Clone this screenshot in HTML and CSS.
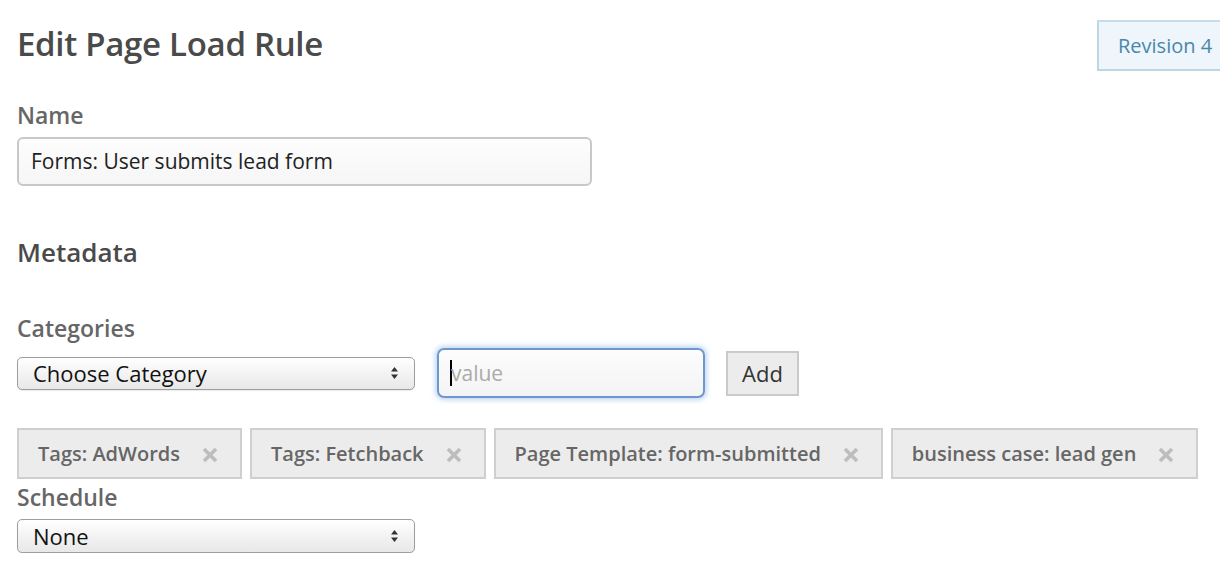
FILE: index.html
```html
<!DOCTYPE html>
<html>
<head>
<meta charset="utf-8">
<link rel="stylesheet" href="styles.css">
</head>
<body>
<div class="page">
  <header class="header">
    <h1 class="title">Edit Page Load Rule</h1>
    <div class="revision">Revision 4</div>
  </header>

  <section class="field name-field">
    <label class="label">Name</label>
    <div class="text-input name-input">Forms: User submits lead form</div>
  </section>

  <h2 class="section-title">Metadata</h2>

  <section class="field categories">
    <label class="label">Categories</label>
    <div class="cat-row">
      <div class="select">
        <span>Choose Category</span>
        <svg class="arrows" width="9" height="14" viewBox="0 0 9 14"><path d="M4.5 1 L8 5.5 L1 5.5 Z M4.5 13 L8 8.5 L1 8.5 Z" fill="#333"/></svg>
      </div>
      <div class="value-input"><span class="caret"></span><span class="placeholder">value</span></div>
      <button class="add-btn">Add</button>
    </div>
    <div class="tags">
      <div class="tag"><span>Tags: AdWords</span><svg class="x" width="16" height="16" viewBox="0 0 16 16"><path d="M2 2 L14 14 M14 2 L2 14" stroke="#bdbdbd" stroke-width="3.6"/></svg></div>
      <div class="tag"><span>Tags: Fetchback</span><svg class="x" width="16" height="16" viewBox="0 0 16 16"><path d="M2 2 L14 14 M14 2 L2 14" stroke="#bdbdbd" stroke-width="3.6"/></svg></div>
      <div class="tag"><span>Page Template: form-submitted</span><svg class="x" width="16" height="16" viewBox="0 0 16 16"><path d="M2 2 L14 14 M14 2 L2 14" stroke="#bdbdbd" stroke-width="3.6"/></svg></div>
      <div class="tag"><span>business case: lead gen</span><svg class="x" width="16" height="16" viewBox="0 0 16 16"><path d="M2 2 L14 14 M14 2 L2 14" stroke="#bdbdbd" stroke-width="3.6"/></svg></div>
    </div>
  </section>

  <section class="field schedule">
    <label class="label">Schedule</label>
    <div class="select small">
      <span>None</span>
      <svg class="arrows" width="9" height="14" viewBox="0 0 9 14"><path d="M4.5 1 L8 5.5 L1 5.5 Z M4.5 13 L8 8.5 L1 8.5 Z" fill="#333"/></svg>
    </div>
  </section>
</div>
</body>
</html>
```
FILE: styles.css
```css
html, body {
  margin: 0;
  padding: 0;
  background: #fff;
  overflow: hidden;
}
body {
  font-family: "Open Sans", "Noto Sans", sans-serif;
  color: #333;
}
.page {
  padding: 0 0 0 17px;
  width: 1220px;
  box-sizing: border-box;
}
.header {
  display: flex;
  justify-content: space-between;
  align-items: flex-start;
  height: 71px;
}
.title {
  margin: 23px 0 0 0;
  font-size: 33px;
  line-height: 42px;
  font-weight: 600;
  color: #4a4a4a;
  letter-spacing: -0.3px;
}
.revision {
  margin: 20px -12px 0 0;
  width: 112px;
  height: 47px;
  padding-left: 19px;
  box-sizing: content-box;
  background: #eef5fb;
  border: 2px solid #bcd6e4;
  border-top-color: #c6dce8;
  color: #4a87ab;
  font-size: 20px;
  line-height: 47px;
  white-space: nowrap;
}
.field {
  display: flex;
  flex-direction: column;
}
.label {
  font-size: 23px;
  font-weight: 600;
  color: #666;
  line-height: 28px;
}
.name-field {
  margin-top: 30px;
}
.name-field .label {
  margin-bottom: 8px;
}
.text-input {
  width: 575px;
  height: 49px;
  box-sizing: border-box;
  border: 2px solid #c8c8c8;
  border-radius: 6px;
  background: linear-gradient(#fdfdfd, #f6f6f6);
  padding: 0 12px;
  font-size: 21px;
  line-height: 45px;
  color: #222;
}
.section-title {
  margin: 49px 0 0 0;
  font-size: 26px;
  line-height: 34px;
  font-weight: 600;
  color: #4a4a4a;
}
.categories {
  margin-top: 45px;
}
.cat-row {
  display: flex;
  align-items: center;
  margin-top: 6px;
  height: 50px;
}
.select {
  width: 398px;
  height: 33px;
  box-sizing: border-box;
  border: 1px solid #9d9d9d;
  border-radius: 5px;
  background: linear-gradient(#ffffff, #f3f3f3 50%, #e8e8e8);
  box-shadow: 0 1px 1px rgba(0,0,0,0.08);
  display: flex;
  align-items: center;
  justify-content: space-between;
  padding: 0 15px 0 15px;
  font-size: 22px;
  color: #111;
}
.value-input {
  margin-left: 22px;
  width: 268px;
  height: 50px;
  flex: none;
  box-sizing: border-box;
  border: 2px solid #6f96cf;
  border-radius: 7px;
  background: linear-gradient(#fcfcfc, #f4f4f4);
  box-shadow: 0 0 5px 2px rgba(140, 180, 230, 0.55);
  display: flex;
  align-items: center;
  padding-left: 11px;
  font-size: 21px;
}
.caret {
  width: 2px;
  height: 26px;
  background: #000;
}
.placeholder {
  color: #aaa;
  margin-left: -1px;
}
.add-btn {
  margin-left: 21px;
  width: 73px;
  height: 45px;
  box-sizing: border-box;
  border: 2px solid #cacaca;
  background: #ececec;
  font-family: inherit;
  font-size: 22px;
  color: #333;
  padding: 0;
}
.tags {
  display: flex;
  gap: 8px;
  margin-top: 30px;
}
.tag {
  height: 51px;
  box-sizing: border-box;
  border: 2px solid #cfcfcf;
  background: #ececec;
  display: flex;
  align-items: center;
  padding: 0 22px 0 19px;
  gap: 22px;
  font-size: 20px;
  font-weight: 600;
  color: #666;
}
.tag .x {
  margin-top: 3px;
}
.schedule {
  margin-top: 4px;
}
.schedule .label {
  margin-bottom: 8px;
}
.select.small {
  height: 34px;
}
```
